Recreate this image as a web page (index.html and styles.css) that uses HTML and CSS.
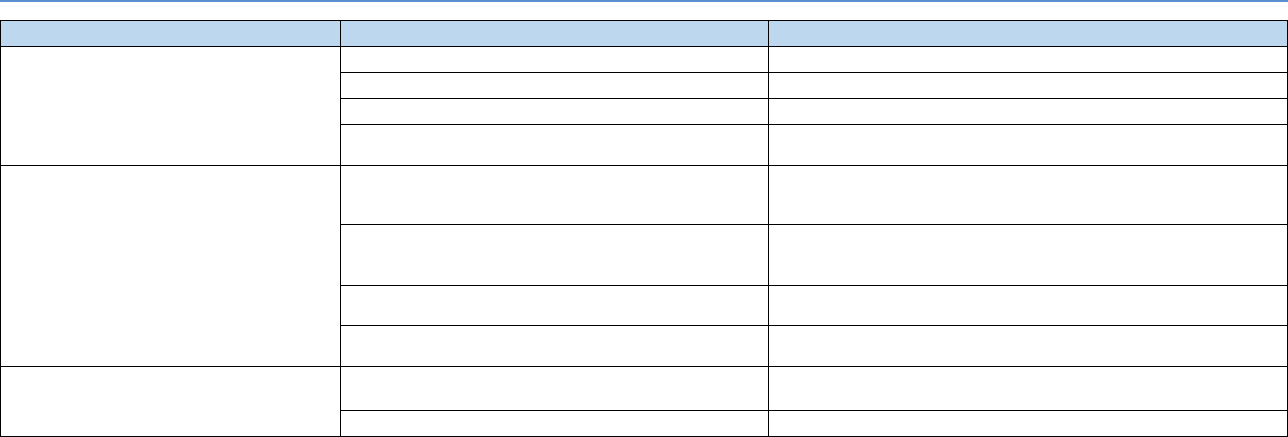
FILE: index.html
```html
<!DOCTYPE html>
<html lang="en">
<head>
    <meta charset="UTF-8">
    <meta name="viewport" content="width=device-width, initial-scale=1.0">
    <title>Table</title>
    <link rel="stylesheet" href="styles.css">
</head>
<body>
    <div class="top-rule"></div>

    <table class="doc-table">
        <thead>
            <tr class="h26">
                <th class="col-a"></th>
                <th class="col-b"></th>
                <th class="col-c"></th>
            </tr>
        </thead>
        <tbody>
            <!-- Group 1 -->
            <tr class="h26">
                <td rowspan="4"></td>
                <td></td>
                <td></td>
            </tr>
            <tr class="h26"><td></td><td></td></tr>
            <tr class="h26"><td></td><td></td></tr>
            <tr class="h41"><td></td><td></td></tr>

            <!-- Group 2 -->
            <tr class="h59">
                <td rowspan="4"></td>
                <td></td>
                <td></td>
            </tr>
            <tr class="h61"><td></td><td></td></tr>
            <tr class="h40"><td></td><td></td></tr>
            <tr class="h41"><td></td><td></td></tr>

            <!-- Group 3 -->
            <tr class="h44">
                <td rowspan="2"></td>
                <td></td>
                <td></td>
            </tr>
            <tr class="h26"><td></td><td></td></tr>
        </tbody>
    </table>
</body>
</html>
```

FILE: styles.css
```css
/* Basic reset */
* {
    margin: 0;
    padding: 0;
    box-sizing: border-box;
    font-family: "Liberation Sans", Arial, sans-serif;
}

body {
    background-color: #fff;
    font-size: 14px;
    color: #000;
}

/* Blue rule above the table */
.top-rule {
    height: 2px;
    background-color: #5b8fd2;
    margin-bottom: 18px;
}

/* Table styles */
.doc-table {
    border-collapse: collapse;
    table-layout: fixed;
    width: 1287px;
}

.doc-table th,
.doc-table td {
    border: 1px solid #000;
    padding: 0;
    vertical-align: top;
}

.doc-table th {
    background-color: #bdd7ee;
}

.col-a { width: 340px; }
.col-b { width: 428px; }
.col-c { width: 519px; }

/* Row heights */
.h26 { height: 26px; }
.h40 { height: 40px; }
.h41 { height: 41px; }
.h44 { height: 44px; }
.h59 { height: 59px; }
.h61 { height: 61px; }
```
